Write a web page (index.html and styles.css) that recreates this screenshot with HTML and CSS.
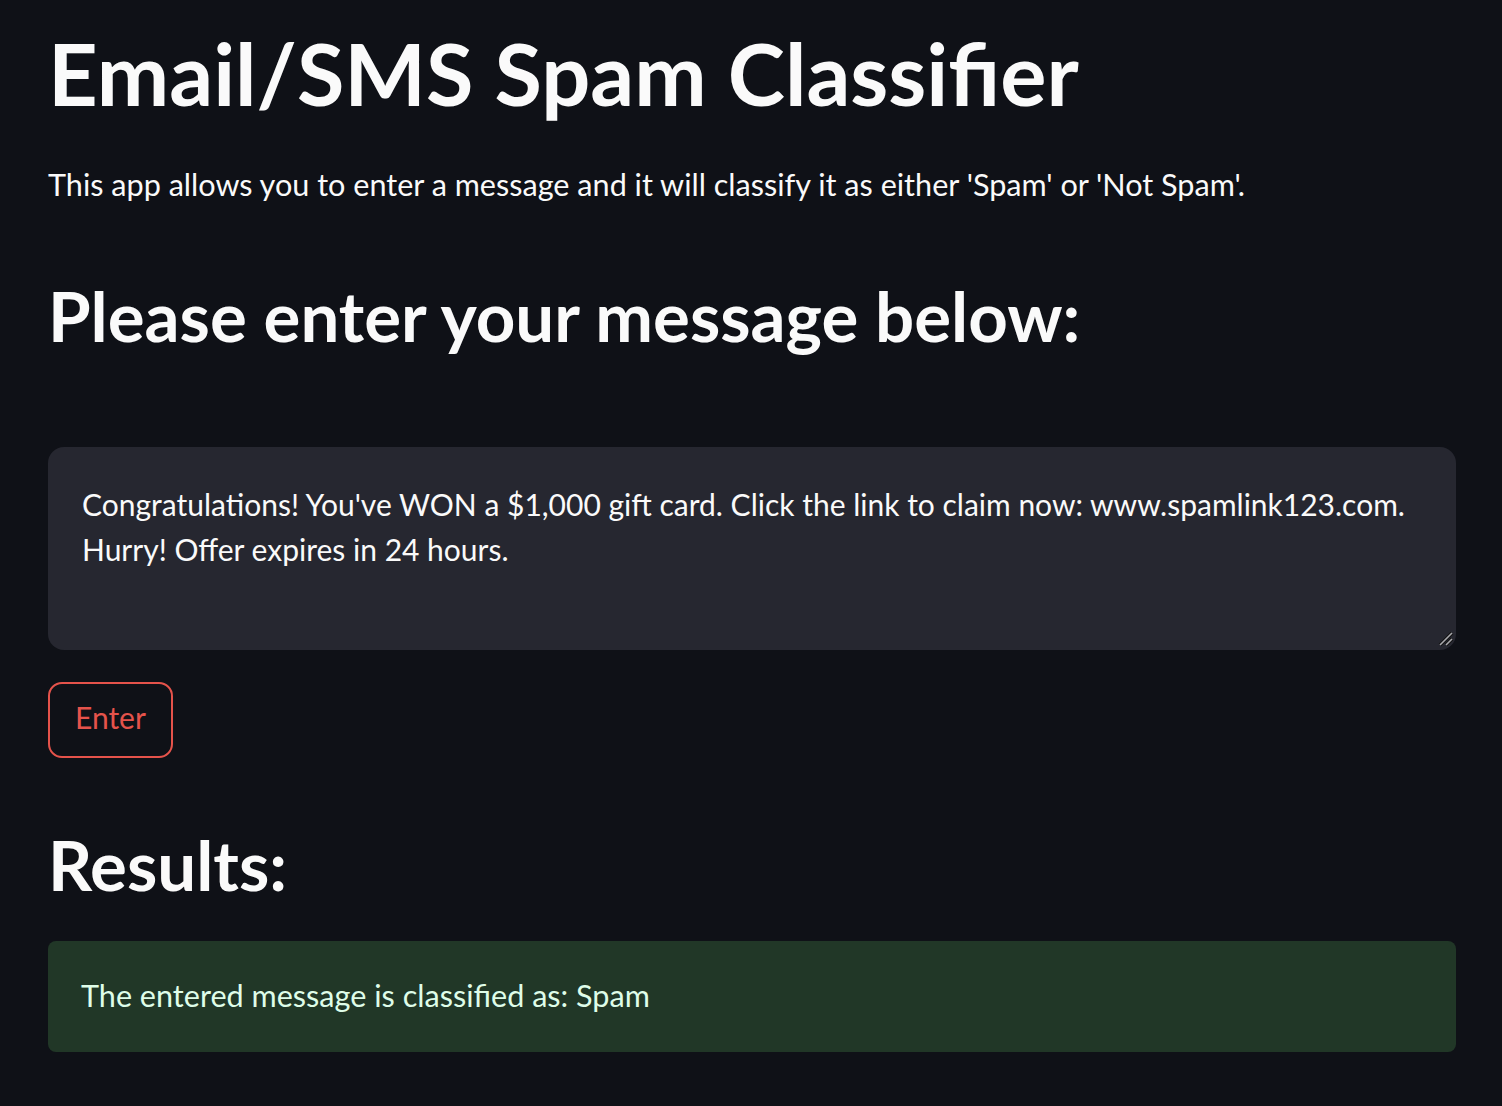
FILE: index.html
```html
<!DOCTYPE html>
<html>
<head>
<meta charset="utf-8">
<link rel="stylesheet" href="styles.css">
</head>
<body>
<main class="app">
  <h1 class="title">Email/SMS Spam Classifier</h1>
  <p class="intro">This app allows you to enter a message and it will classify it as either 'Spam' or 'Not Spam'.</p>
  <h2 class="heading">Please enter your message below:</h2>
  <div class="field">
    <textarea class="message">Congratulations! You've WON a $1,000 gift card. Click the link to claim now: www.spamlink123.com. Hurry! Offer expires in 24 hours.</textarea>
    <svg class="grip" width="16" height="16" viewBox="0 0 16 16" aria-hidden="true">
      <line x1="2" y1="14" x2="14" y2="2" stroke="#111" stroke-width="3.4"/>
      <line x1="8" y1="14" x2="14" y2="8" stroke="#111" stroke-width="3.4"/>
      <line x1="2" y1="14" x2="14" y2="2" stroke="#a9a9ad" stroke-width="1.6"/>
      <line x1="8" y1="14" x2="14" y2="8" stroke="#a9a9ad" stroke-width="1.6"/>
    </svg>
  </div>
  <button class="enter">Enter</button>
  <h2 class="heading results">Results:</h2>
  <div class="success">The entered message is classified as: Spam</div>
</main>
</body>
</html>
```

FILE: styles.css
```css
html, body {
  margin: 0;
  padding: 0;
  background: #0f1117;
}
body {
  font-family: "Lato", "Liberation Sans", sans-serif;
  color: #fafafa;
  width: 1502px;
  height: 1106px;
  overflow: hidden;
}
.app {
  display: flex;
  flex-direction: column;
  align-items: flex-start;
  padding: 0 46px 0 48px;
}
.title {
  margin: 21px 0 0 0;
  font-size: 86.5px;
  font-weight: 700;
  line-height: 1.2;
}
.intro {
  margin: 39px 0 0 0;
  font-size: 30.6px;
  line-height: 1.4;
}
.heading {
  margin: 68px 0 0 0;
  font-size: 69px;
  font-weight: 700;
  line-height: 1.2;
}
.field {
  position: relative;
  margin-top: 90px;
  width: 1408px;
  height: 203px;
  background: #262730;
  border-radius: 16px;
  box-sizing: border-box;
}
.message {
  display: block;
  width: 100%;
  height: 100%;
  box-sizing: border-box;
  background: transparent;
  border: none;
  outline: none;
  color: #fafafa;
  font-family: inherit;
  font-size: 30px;
  line-height: 45px;
  padding: 35px 34px 17px;
  resize: none;
}
.grip {
  position: absolute;
  right: 2px;
  bottom: 3px;
}
.enter {
  margin-top: 32px;
  height: 76px;
  padding: 0 25px 7px;
  background: #0f1117;
  border: 2px solid #e5534b;
  border-radius: 14px;
  color: #e5534b;
  font-family: inherit;
  font-size: 30px;
}
.results {
  margin-top: 66px;
}
.success {
  margin-top: 34px;
  width: 1408px;
  height: 111px;
  box-sizing: border-box;
  background: #213727;
  border-radius: 8px;
  color: #dffde9;
  font-size: 30.6px;
  display: flex;
  align-items: center;
  padding: 0 33px 2px;
}
```
